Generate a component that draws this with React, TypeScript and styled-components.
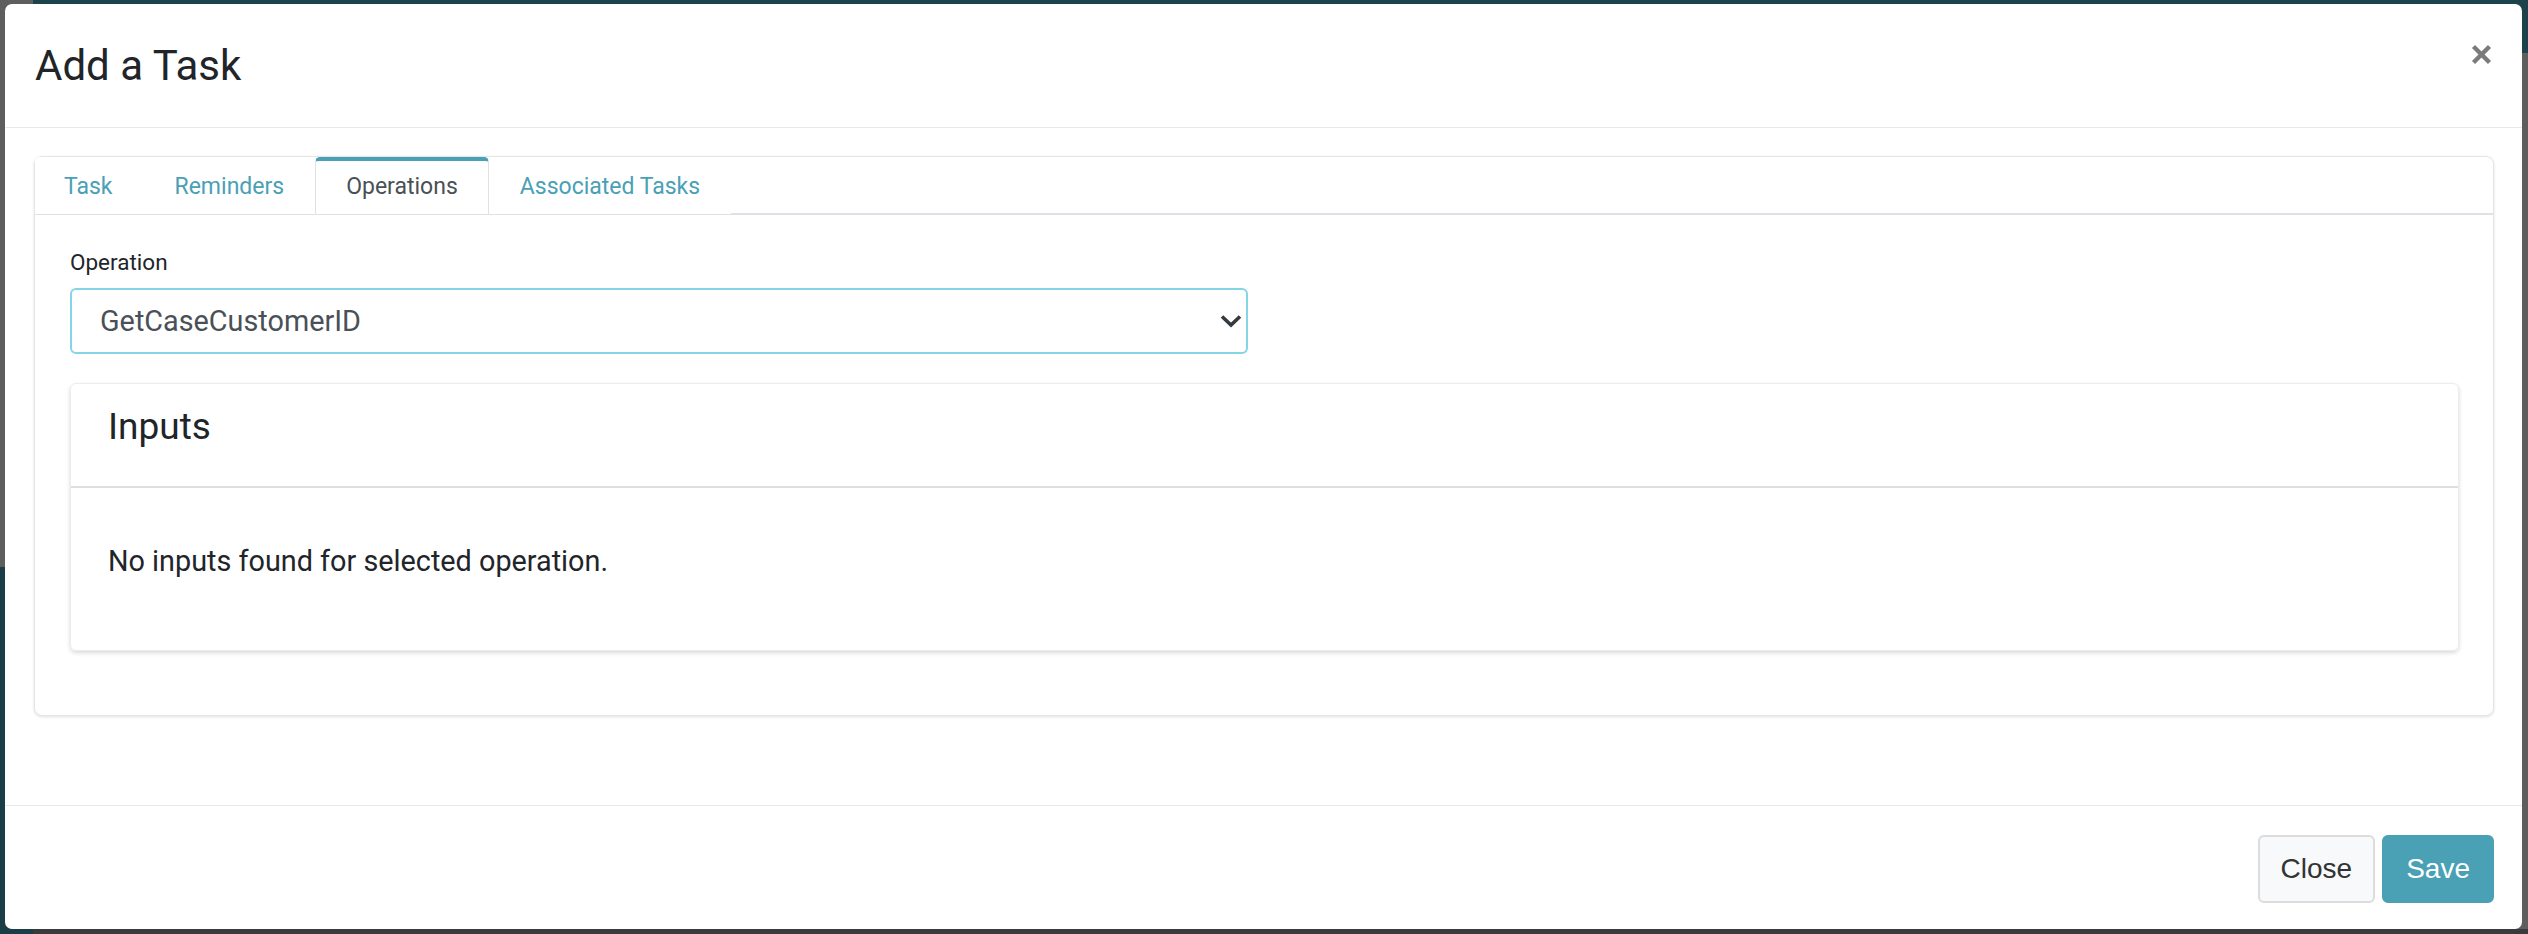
import React, { useState } from "react";
import styled, { createGlobalStyle } from "styled-components";

const GlobalStyle = createGlobalStyle`
  html, body {
    margin: 0;
    padding: 0;
  }
  body {
    font-family: Roboto, "Noto Sans", sans-serif;
    color: #212529;
  }
  * {
    box-sizing: border-box;
  }
`;

const teal = "#4aa0b5";

/* the page behind the modal, dimmed by the backdrop */
const Backdrop = styled.div`
  width: 2528px;
  height: 934px;
  padding: 4px 6px 5px 5px;
  display: flex;
  background:
    linear-gradient(#1c434b, #1c434b) 33px 0 / calc(100% - 33px) 53px no-repeat,
    linear-gradient(#1b3e46, #1b3e46) 0 567px / 33px 100% no-repeat,
    linear-gradient(#3a3a3a, #3a3a3a) 0 929px / 100% 5px no-repeat,
    #5e5e5e;
`;

const Modal = styled.div`
  flex: 1;
  display: flex;
  flex-direction: column;
  background: #fff;
  border-radius: 7px;
  overflow: hidden;
`;

const ModalHeader = styled.div`
  display: flex;
  justify-content: space-between;
  padding: 30px 30px 30px 30px;
  border-bottom: 1px solid #e8e8ee;
`;

const ModalTitle = styled.h5`
  margin: 0;
  font-size: 42px;
  line-height: 63px;
  font-weight: 400;
  color: #212529;
`;

const CloseX = styled.button`
  align-self: flex-start;
  margin-top: 10px;
  width: 21px;
  height: 21px;
  padding: 0;
  border: none;
  background: none;
  color: #7b7b7b;
  cursor: pointer;
  display: flex;
`;

const ModalBody = styled.div`
  flex: 1;
  padding: 28px 28px 0 29px;
`;

const TabCard = styled.div`
  border: 1px solid #e6e6e6;
  border-radius: 8px;
  box-shadow: 0 1px 3px rgba(0, 0, 0, 0.12);
  background: #fff;
`;

const TabList = styled.div`
  display: flex;
  border-bottom: 2px solid #dee2e6;
`;

const Tab = styled.button<{ active?: boolean }>`
  font-family: Roboto, sans-serif;
  font-size: 23px;
  line-height: 34.5px;
  padding: 9px 30px 9px;
  margin-bottom: -1px;
  background: #fff;
  border: 1px solid ${(p) => (p.active ? "#dee2e6" : "transparent")};
  border-top: 4px solid ${(p) => (p.active ? teal : "transparent")};
  border-bottom: none;
  border-radius: 5px 5px 0 0;
  color: ${(p) => (p.active ? "#495057" : teal)};
  cursor: pointer;

  &:first-child {
    padding-left: 28px;
  }
`;

const CardBody = styled.div`
  padding: 31px 34px 64px 35px;
`;

const Label = styled.label`
  display: block;
  font-size: 22.5px;
  line-height: 33.75px;
  margin-bottom: 9px;
  color: #212529;
`;

const SelectWrap = styled.div`
  position: relative;
  width: 1178px;
`;

const Select = styled.select`
  appearance: none;
  width: 100%;
  height: 66px;
  padding: 0 60px 0 28px;
  font-family: Roboto, sans-serif;
  font-size: 28.8px;
  color: #495057;
  background: #fff;
  border: 2px solid #84d6e6;
  border-radius: 6px;
  outline: none;
`;

const Chevron = styled.svg`
  position: absolute;
  right: 5px;
  top: 50%;
  transform: translateY(-50%);
  pointer-events: none;
`;

const InputsCard = styled.div`
  margin-top: 29px;
  border: 1px solid #ececec;
  border-radius: 6px;
  box-shadow: 0 2px 4px rgba(0, 0, 0, 0.15);
`;

const InputsHeader = styled.div`
  padding: 21px 37px 36px;
  border-bottom: 2px solid #dfdfdf;
`;

const InputsTitle = styled.h4`
  margin: 0;
  font-size: 37px;
  line-height: 44.4px;
  font-weight: 400;
  color: #212529;
`;

const InputsBody = styled.div`
  padding: 52px 37px 67px;
  font-size: 28.8px;
  line-height: 43.2px;
  color: #212529;
`;

const ModalFooter = styled.div`
  display: flex;
  justify-content: flex-end;
  gap: 7px;
  padding: 29px 28px 26px;
  border-top: 1px solid #e8e8ee;
`;

const Button = styled.button<{ primary?: boolean }>`
  height: 68px;
  padding: 0 ${(p) => (p.primary ? 22 : 21)}px;
  font-family: "Liberation Sans", Arial, sans-serif;
  font-size: 28px;
  border-radius: 6px;
  border: 2px solid ${(p) => (p.primary ? teal : "#dcdcdc")};
  background: ${(p) => (p.primary ? teal : "#f8f9fa")};
  color: ${(p) => (p.primary ? "#fff" : "#333")};
  cursor: pointer;
`;

const tabs = ["Task", "Reminders", "Operations", "Associated Tasks"];

const App: React.FC = () => {
  const [activeTab, setActiveTab] = useState("Operations");

  return (
    <>
      <GlobalStyle />
      <Backdrop>
        <Modal>
          <ModalHeader>
            <ModalTitle>Add a Task</ModalTitle>
            <CloseX aria-label="Close">
              <svg width="21" height="21" viewBox="0 0 21 21">
                <path
                  d="M2.5 2.5 L18.5 18.5 M18.5 2.5 L2.5 18.5"
                  stroke="currentColor"
                  strokeWidth="4.4"
                />
              </svg>
            </CloseX>
          </ModalHeader>
          <ModalBody>
            <TabCard>
              <TabList>
                {tabs.map((t) => (
                  <Tab
                    key={t}
                    active={t === activeTab}
                    onClick={() => setActiveTab(t)}
                  >
                    {t}
                  </Tab>
                ))}
              </TabList>
              <CardBody>
                <Label>Operation</Label>
                <SelectWrap>
                  <Select defaultValue="GetCaseCustomerID">
                    <option>GetCaseCustomerID</option>
                  </Select>
                  <Chevron width="24" height="16" viewBox="0 0 24 16">
                    <path
                      d="M3 3.5 L12 12 L21 3.5"
                      fill="none"
                      stroke="#343a40"
                      strokeWidth="3.6"
                    />
                  </Chevron>
                </SelectWrap>
                <InputsCard>
                  <InputsHeader>
                    <InputsTitle>Inputs</InputsTitle>
                  </InputsHeader>
                  <InputsBody>No inputs found for selected operation.</InputsBody>
                </InputsCard>
              </CardBody>
            </TabCard>
          </ModalBody>
          <ModalFooter>
            <Button>Close</Button>
            <Button primary>Save</Button>
          </ModalFooter>
        </Modal>
      </Backdrop>
    </>
  );
};

export default App;
